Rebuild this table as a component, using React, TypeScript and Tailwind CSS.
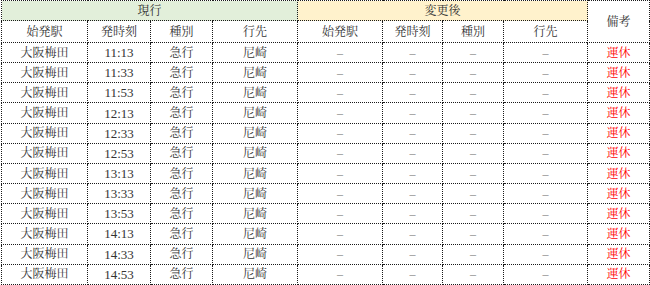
import React from 'react';

const rows = [
  '11:13', '11:33', '11:53', '12:13', '12:33', '12:53',
  '13:13', '13:33', '13:53', '14:13', '14:33', '14:53',
];

const cell = 'border border-dotted border-[#1a1a1a] text-center p-0 font-normal';

export default function App() {
  return (
    <div className="w-[650px] h-[285px] bg-white pl-px overflow-hidden">
      <table
        className="table-fixed border-collapse text-[12px] text-[#333] leading-none"
        style={{ fontFamily: '"Liberation Serif", "Noto Serif CJK JP", "Noto Sans CJK JP", serif' }}
      >
        <colgroup>
          <col className="w-[86px]" />
          <col className="w-[63px]" />
          <col className="w-[62px]" />
          <col className="w-[85px]" />
          <col className="w-[85px]" />
          <col className="w-[60px]" />
          <col className="w-[61px]" />
          <col className="w-[84px]" />
          <col className="w-[62px]" />
        </colgroup>
        <thead>
          {/* group header */}
          <tr className="h-[20px]">
            <th colSpan={4} className={`${cell} bg-[#e2efda]`}>現行</th>
            <th colSpan={4} className={`${cell} bg-[#fff2cc]`}>変更後</th>
            <th rowSpan={2} className={`${cell} bg-white`}>備考</th>
          </tr>
          <tr className="h-[22px]">
            <th className={cell}>始発駅</th>
            <th className={cell}>発時刻</th>
            <th className={cell}>種別</th>
            <th className={cell}>行先</th>
            <th className={cell}>始発駅</th>
            <th className={cell}>発時刻</th>
            <th className={cell}>種別</th>
            <th className={cell}>行先</th>
          </tr>
        </thead>
        <tbody>
          {rows.map((t) => (
            <tr key={t} className="h-[20.17px]">
              <td className={cell}>大阪梅田</td>
              <td className={`${cell} text-[13px]`}>{t}</td>
              <td className={cell}>急行</td>
              <td className={cell}>尼崎</td>
              <td className={`${cell} text-[#888]`}>–</td>
              <td className={`${cell} text-[#888]`}>–</td>
              <td className={`${cell} text-[#888]`}>–</td>
              <td className={`${cell} text-[#888]`}>–</td>
              <td className={`${cell} text-[#f00]`}>運休</td>
            </tr>
          ))}
        </tbody>
      </table>
    </div>
  );
}
